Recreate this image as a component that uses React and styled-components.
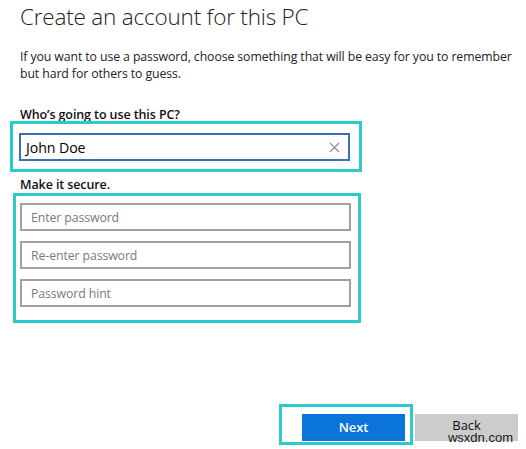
import styled, { createGlobalStyle } from 'styled-components';

const GlobalStyle = createGlobalStyle`
  html, body {
    margin: 0;
    padding: 0;
    background: #fff;
  }
  body {
    font-family: 'Open Sans', 'Noto Sans', sans-serif;
    color: #000;
  }
`;

const Page = styled.div`
  position: relative;
  display: flex;
  flex-direction: column;
  height: 449px;
  width: 526px;
  overflow: hidden;
`;

const Title = styled.h1`
  margin: 0 0 0 20px;
  padding-top: 1px;
  font-weight: 300;
  font-size: 22.5px;
  line-height: 32px;
  color: #222;
  letter-spacing: -0.2px;
`;

const Intro = styled.p`
  margin: 15px 0 0 20px;
  font-size: 12.3px;
  line-height: 17px;
  color: #222;
  white-space: nowrap;
  letter-spacing: -0.1px;
`;

const Label = styled.div`
  margin: ${(p) => p.$top}px 0 0 20px;
  font-size: 12.5px;
  line-height: 12px;
  font-weight: 600;
  color: #111;
  letter-spacing: -0.1px;
`;

const Highlight = styled.div`
  display: flex;
  flex-direction: column;
  gap: 10px;
  box-sizing: border-box;
  border: 3px solid #2ccaca;
  margin-top: ${(p) => p.$top}px;
  margin-left: ${(p) => p.$left}px;
  width: ${(p) => p.$width}px;
  padding: ${(p) => p.$pad};
`;

const Field = styled.div`
  display: flex;
  align-items: center;
  box-sizing: border-box;
  height: 28px;
  width: 331px;
  padding: 0 8px 0 ${(p) => (p.$focused ? 5 : 9)}px;
  border: 2px solid ${(p) => (p.$focused ? '#3c6fb4' : '#a0a0a0')};
  background: #fff;
`;

const Value = styled.span`
  flex: 1;
  font-size: 14.2px;
  color: #000;
  letter-spacing: -0.1px;
`;

const Placeholder = styled.span`
  flex: 1;
  font-size: 12.3px;
  color: #7a7a7a;
  letter-spacing: -0.1px;
`;

const ClearIcon = styled.svg`
  width: 11px;
  height: 11px;
  margin-right: 0;
`;

const Footer = styled.div`
  display: flex;
  align-items: flex-end;
  gap: 2px;
  margin-top: auto;
  margin-bottom: 4px;
  padding-right: 8px;
  justify-content: flex-end;
`;

const ButtonFrame = styled.div`
  box-sizing: border-box;
  border: 3px solid #2ccaca;
  width: 134px;
  height: 41px;
  padding: 7px 4px 0 20px;
`;

const Button = styled.button`
  box-sizing: border-box;
  width: 103px;
  height: 27px;
  border: none;
  margin: 0;
  padding: 0 0 ${(p) => (p.$primary ? 2 : 5)}px;
  font-family: 'Open Sans', 'Noto Sans', sans-serif;
  font-size: 13px;
  font-weight: ${(p) => (p.$primary ? 600 : 400)};
  color: ${(p) => (p.$primary ? '#fff' : '#111')};
  background: ${(p) => (p.$primary ? '#0a74da' : '#cccccc')};
  margin-bottom: ${(p) => (p.$primary ? 0 : 4)}px;
  letter-spacing: -0.1px;
`;

const Watermark = styled.div`
  position: absolute;
  right: 13px;
  bottom: 4px;
  font-family: 'Liberation Sans', Arial, sans-serif;
  font-size: 13px;
  color: #1a1a1a;
`;

const fields = ['Enter password', 'Re-enter password', 'Password hint'];

export default function App() {
  return (
    <Page>
      <GlobalStyle />
      <Title>Create an account for this PC</Title>
      <Intro>
        If you want to use a password, choose something that will be easy for you to remember
        <br />
        but hard for others to guess.
      </Intro>
      <Label $top={27}>Who’s going to use this PC?</Label>
      <Highlight $top={0} $left={10} $width={352} $pad='9px 0 8px 6px'>
        <Field $focused>
          <Value>John Doe</Value>
          <ClearIcon viewBox='0 0 11 11'>
            <path d='M1 1 L10 10 M10 1 L1 10' stroke='#8a8a8a' strokeWidth='1.1' fill='none' />
          </ClearIcon>
        </Field>
      </Highlight>
      <Label $top={7}>Make it secure.</Label>
      <Highlight $top={2} $left={13} $width={348} $pad='7px 0 13px 4px'>
        {fields.map((f) => (
          <Field key={f}>
            <Placeholder>{f}</Placeholder>
          </Field>
        ))}
      </Highlight>
      <Footer>
        <ButtonFrame>
          <Button $primary>Next</Button>
        </ButtonFrame>
        <Button>Back</Button>
      </Footer>
      <Watermark>wsxdn.com</Watermark>
    </Page>
  );
}
